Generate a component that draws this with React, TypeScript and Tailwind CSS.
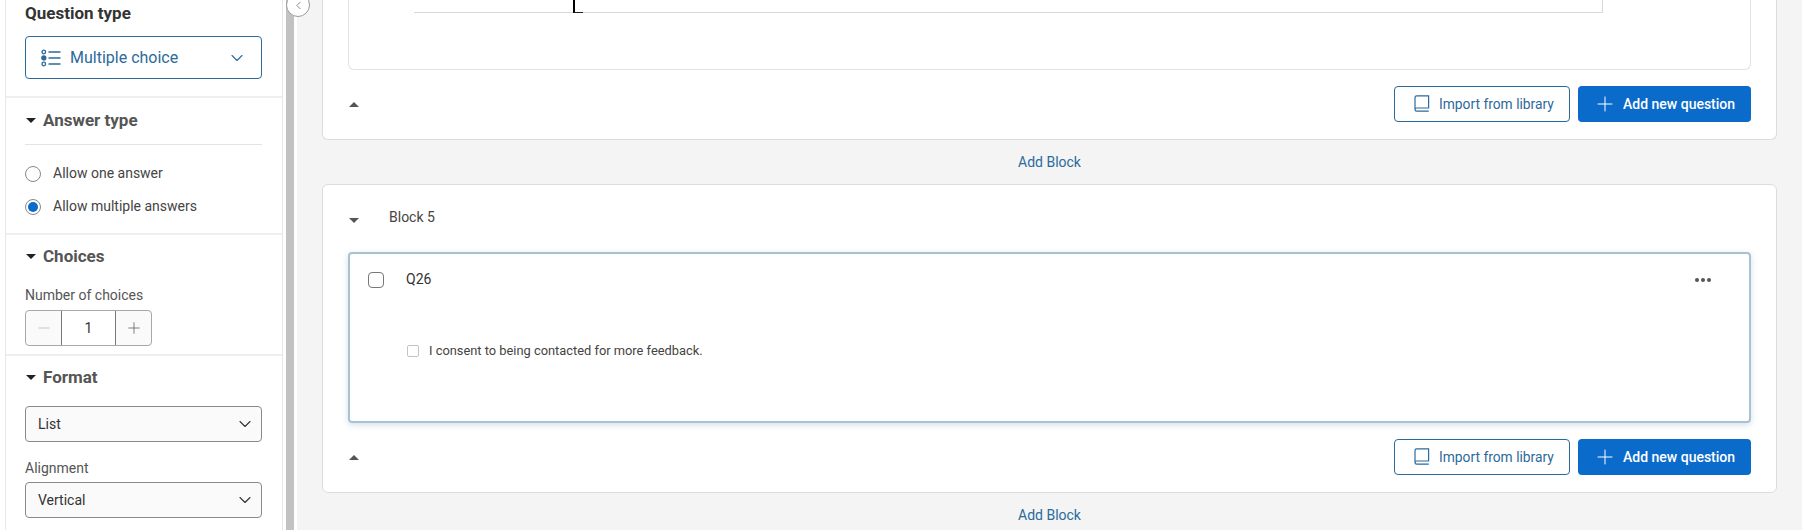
import React from 'react';
import { ChevronDown, ChevronLeft, Minus, Plus } from 'lucide-react';

const font = 'font-["Roboto",sans-serif]';

const Caret = ({ up = false, dark = false }: { up?: boolean; dark?: boolean }) => (
  <svg width="10" height="5" viewBox="0 0 10 5" className={dark ? 'text-[#222]' : 'text-[#555]'}>
    <path d={up ? 'M0 5 L5 0 L10 5 Z' : 'M0 0 L10 0 L5 5 Z'} fill="currentColor" />
  </svg>
);

const ListIcon = () => (
  <svg width="20" height="18" viewBox="0 0 20 18" fill="none" stroke="#2b6a9b" strokeWidth="1.3">
    <circle cx="2.8" cy="3" r="1.8" />
    <circle cx="2.8" cy="9" r="2" fill="#2b6a9b" />
    <circle cx="2.8" cy="15" r="1.8" />
    <path d="M7.5 3H19.5M7.5 9H19.5M7.5 15H19.5" />
  </svg>
);

const BookIcon = () => (
  <svg width="16" height="18" viewBox="0 0 16 18" fill="none" stroke="#2b6a9b" strokeWidth="1.2">
    <path d="M1 14.5V2.5C1 1.4 1.8 0.8 2.8 0.8H14.6V13H2.8C1.8 13 1 13.6 1 14.5C1 15.6 1.8 16.2 2.8 16.2H14.8" />
  </svg>
);

const SectionHeader = ({ title }: { title: string }) => (
  <div className="flex items-center gap-[7px] pl-[1px]">
    <Caret dark />
    <span className="text-[17px] leading-[22px] font-bold text-[#555]">{title}</span>
  </div>
);

const Select = ({ value }: { value: string }) => (
  <div className="flex h-[36px] w-[237px] items-center justify-between rounded-[4px] border border-[#8a8a8a] bg-[#fafafa] pl-[12px] pr-[6px]">
    <span className="text-[14px] text-[#333]">{value}</span>
    <ChevronDown size={20} strokeWidth={1.3} color="#333" />
  </div>
);

const Radio = ({ label, checked = false }: { label: string; checked?: boolean }) => (
  <div className="flex h-[33px] items-center gap-[12px]">
    <span className="flex h-[16px] w-[16px] items-center justify-center rounded-full border border-[#888] bg-white">
      {checked && <span className="h-[10px] w-[10px] rounded-full bg-[#0b6bcb]" />}
    </span>
    <span className="text-[14px] text-[#444]">{label}</span>
  </div>
);

const Sidebar = () => (
  <aside className="ml-[5px] h-[530px] w-[278px] shrink-0 border-x border-[#e8e8e8] bg-white">
    <section className="h-[98px] border-b-2 border-[#efefef] pl-[19px] pr-[19px]">
      <h2 className="pt-[2px] text-[17px] leading-[22px] font-bold text-[#333]">Question type</h2>
      <div className="mt-[12px] flex h-[43px] w-[237px] items-center rounded-[4px] border border-[#2b6a9b] pl-[15px] pr-[14px]">
        <ListIcon />
        <span className="ml-[9px] flex-1 text-[16px] text-[#2b6a9b]">Multiple choice</span>
        <ChevronDown size={20} strokeWidth={1.3} color="#2b6a9b" />
      </div>
    </section>
    <section className="h-[137px] border-b-2 border-[#efefef] pl-[19px] pr-[19px] pt-[11px]">
      <SectionHeader title="Answer type" />
      <div className="mt-[13px] w-[237px] border-t border-[#e4e4e4] pt-[12px]">
        <Radio label="Allow one answer" />
        <Radio label="Allow multiple answers" checked />
      </div>
    </section>
    <section className="h-[121px] border-b-2 border-[#efefef] pl-[19px] pr-[19px] pt-[10px]">
      <SectionHeader title="Choices" />
      <p className="mt-[18px] text-[14px] leading-[20px] text-[#555]">Number of choices</p>
      <div className="mt-[5px] flex h-[36px] w-[127px] rounded-[4px] border border-[#a8a8a8] bg-[#fafafa]">
        <div className="flex w-[35px] items-center justify-center">
          <Minus size={18} strokeWidth={1.1} color="#bbb" />
        </div>
        <div className="flex w-[55px] items-center justify-center border-x border-[#777] bg-white text-[14px] text-[#333]">1</div>
        <div className="flex flex-1 items-center justify-center">
          <Plus size={18} strokeWidth={1.1} color="#666" />
        </div>
      </div>
    </section>
    <section className="pl-[19px] pr-[19px] pt-[10px]">
      <SectionHeader title="Format" />
      <div className="mt-[18px]">
        <Select value="List" />
      </div>
      <p className="mt-[16px] mb-[4px] text-[14px] leading-[20px] text-[#555]">Alignment</p>
      <Select value="Vertical" />
    </section>
  </aside>
);

const BlockFooter = () => (
  <div className="flex items-center justify-between pl-[1px]">
    <Caret up />
    <div className="flex gap-[8px]">
      <button className="flex h-[36px] w-[176px] items-center rounded-[4px] border border-[#2b6a9b] bg-white pl-[19px] text-[13.8px] text-[#2b6a9b]">
        <BookIcon />
        <span className="ml-[9px]">Import from library</span>
      </button>
      <button className="flex h-[36px] w-[173px] items-center rounded-[4px] bg-[#0b6bcb] pl-[15px] text-[14px] font-medium text-white">
        <Plus size={24} strokeWidth={1} color="#fff" />
        <span className="ml-[6px]">Add new question</span>
      </button>
    </div>
  </div>
);

const AddBlock = () => (
  <div className="flex h-[44px] items-center justify-center text-[14px] text-[#2b6a9b]">Add Block</div>
);

export default function App() {
  return (
    <div className={`relative flex h-[530px] w-[1804px] overflow-hidden bg-white ${font}`}>
      <Sidebar />
      <div className="ml-[3px] w-[8px] shrink-0 bg-[#c2c2c2]" />
      <div className="absolute left-[286px] top-[-7px] flex h-[24px] w-[24px] items-center justify-center rounded-full border border-[#999] bg-white">
        <ChevronLeft size={13} strokeWidth={1.3} color="#555" />
      </div>
      <main className="ml-[3px] h-[530px] flex-1 bg-[#f4f4f4] pl-[25px] pr-[25px]">
        <div className="h-[140px] rounded-b-[6px] border-x border-b border-[#dcdcdc] bg-white pl-[25px] pr-[25px]">
          <div className="h-[70px] rounded-b-[6px] border-x border-b border-[#e2e2e2] pl-[65px] pr-[147px]">
            <div className="relative h-[13px] border-r border-b border-[#d8d8d8]">
              <div className="absolute bottom-[-1px] left-[159px] h-[13px] w-[10px] border-b border-l-2 border-b-[#222] border-l-black" />
            </div>
          </div>
          <div className="mt-[16px]">
            <BlockFooter />
          </div>
        </div>
        <AddBlock />
        <div className="h-[309px] rounded-[6px] border border-[#dcdcdc] bg-white pl-[25px] pr-[25px]">
          <div className="flex h-[67px] items-center pb-[2px]">
            <span className="mt-[6px] ml-[1px]"><Caret /></span>
            <span className="ml-[30px] text-[14px] text-[#444]">Block 5</span>
          </div>
          <div className="h-[171px] rounded-[4px] border-2 border-[#a9c2d3] shadow-[0_2px_6px_rgba(90,130,170,0.25)]">
            <div className="flex items-center pl-[18px] pr-[38px] pt-[15px]">
              <span className="h-[16px] w-[16px] rounded-[4px] border border-[#777]" />
              <span className="ml-[22px] flex-1 text-[14px] text-[#333]">Q26</span>
              <span className="flex gap-[2px]">
                <span className="h-[4px] w-[4px] rounded-full bg-[#555]" />
                <span className="h-[4px] w-[4px] rounded-full bg-[#555]" />
                <span className="h-[4px] w-[4px] rounded-full bg-[#555]" />
              </span>
            </div>
            <div className="mt-[51px] flex items-center pl-[57px]">
              <span className="h-[12px] w-[12px] rounded-[2px] border border-[#c4c4c4]" />
              <span className="ml-[10px] text-[12.85px] text-[#444]">I consent to being contacted for more feedback.</span>
            </div>
          </div>
          <div className="mt-[16px]">
            <BlockFooter />
          </div>
        </div>
        <AddBlock />
      </main>
      <div className="w-[2px] shrink-0 bg-white" />
    </div>
  );
}
